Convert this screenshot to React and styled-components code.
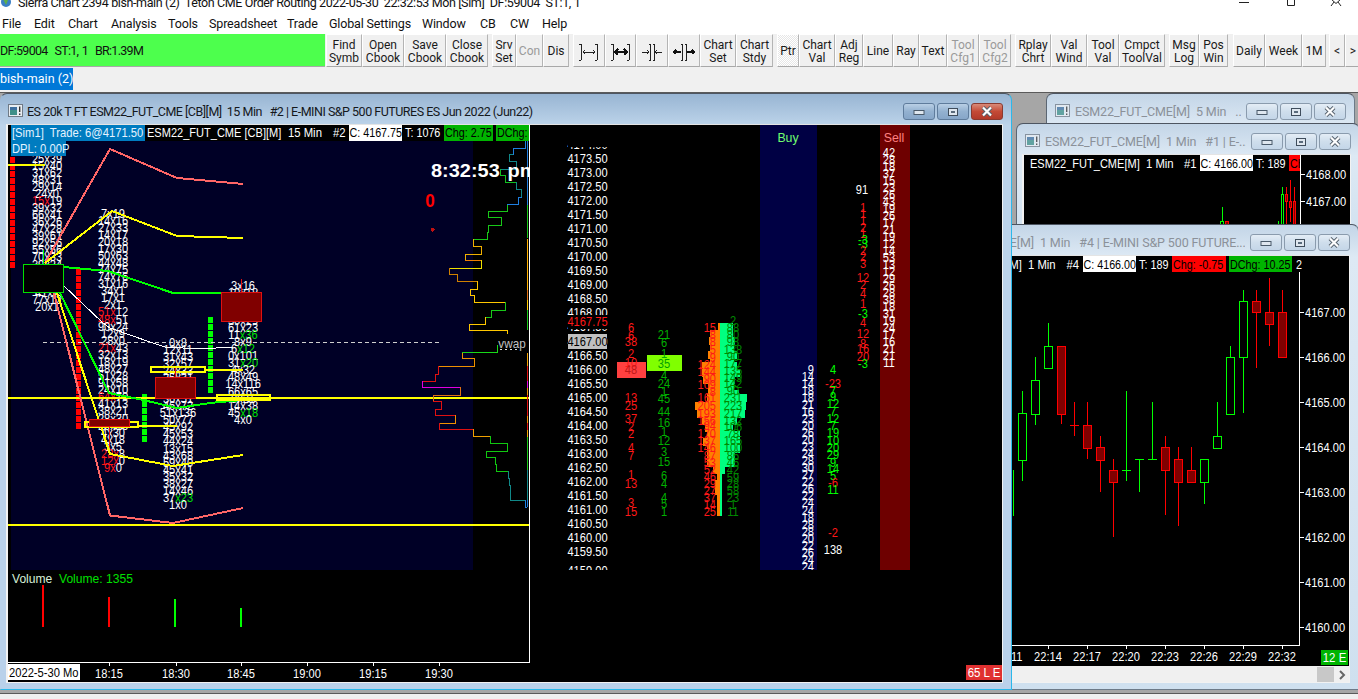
import React from 'react';
import styled, { createGlobalStyle } from 'styled-components';

const GlobalStyle = createGlobalStyle`
  html, body { margin: 0; padding: 0; background: #f0f0f0; overflow: hidden; }
`;

const Screen = styled.div`
  width: 1358px;
  height: 699px;
  overflow: hidden;
  display: flex;
  flex-direction: column;
  background: #f0f0f0;
  color: #111;
  font: 12px Roboto, "Liberation Sans", sans-serif;
`;

const TitleBar = styled.div`
  height: 12px;
  flex: none;
  background: #fff;
  display: flex;
  align-items: flex-start;
  justify-content: space-between;
  overflow: hidden;
  line-height: 6px;
  white-space: pre;
  padding-left: 1px;
`;

const TitleLeft = styled.div`
  display: flex;
  gap: 7px;
  font-size: 12.5px;
  letter-spacing: -0.38px;
`;

const SysButtons = styled.div`
  display: flex;
  width: 104px;
  justify-content: space-between;
  padding-right: 16px;
`;

const MenuBar = styled.div`
  height: 22px;
  flex: none;
  background: #fff;
  display: flex;
  align-items: center;
  padding: 0 0 0 2px;
  box-sizing: border-box;
`;

const MenuItem = styled.span`
  width: ${(p) => p.$w}px;
  font-size: 12.5px;
  letter-spacing: -0.15px;
`;

const Toolbar = styled.div`
  height: 34px;
  flex: none;
  display: flex;
  background: #f0f0f0;
`;

const StatusBox = styled.div`
  width: 325px;
  height: 33px;
  flex: none;
  margin-right: 1px;
  background: #4dff4d;
  border-bottom: 1px solid #a8a8a8;
  box-sizing: border-box;
  line-height: 33px;
  font-size: 12.5px;
  letter-spacing: -0.7px;
  word-spacing: 1px;
  white-space: pre;
`;

const ToolGroup = styled.div`
  display: flex;
  flex: none;
  margin-right: ${(p) => p.$gap ?? 4}px;
`;

const ToolButton = styled.div`
  width: ${(p) => p.$w}px;
  height: 33px;
  flex: none;
  box-sizing: border-box;
  padding-top: 2px;
  display: flex;
  align-items: center;
  justify-content: center;
  text-align: center;
  line-height: 13px;
  font-size: 12px;
  white-space: pre;
  color: ${(p) => (p.$off ? '#9a9a9a' : '#1a1a1a')};
  border-top: 1px solid #fff;
  border-left: 1px solid #fff;
  border-right: 1px solid #b4b4b4;
  border-bottom: 1px solid #a8a8a8;
  background: ${(p) =>
    p.$on ? 'repeating-conic-gradient(#fff 0 25%, #e6e6e6 0 50%) 0 0/2px 2px' : '#f0f0f0'};
`;

const TabRow = styled.div`
  height: 24px;
  flex: none;
  background: #f0f0f0;
`;

const Tab = styled.div`
  width: 73px;
  height: 22px;
  background: #0078d7;
  color: #fff;
  line-height: 22px;
  font-size: 12.5px;
  white-space: nowrap;
`;

const Desktop = styled.div`
  position: relative;
  flex: 1;
  background: #a6a6a6;
  border-top: 1px solid #5a5a5a;
  overflow: hidden;
`;

const BottomStrip = styled.div`
  height: 5px;
  flex: none;
  background: #f0f0f0;
  border-top: 1px solid #5a5a5a;
`;

const Window = styled.div`
  position: absolute;
  left: ${(p) => p.$left}px;
  top: ${(p) => p.$top}px;
  width: ${(p) => p.$w}px;
  height: ${(p) => p.$h}px;
  z-index: ${(p) => p.$z};
  box-sizing: border-box;
  display: flex;
  flex-direction: column;
  padding: 0 8px 6px 5px;
  border-radius: 7px 7px 0 0;
  border-top: 1px solid #4d5561;
  border-left: 1px solid ${(p) => (p.$active ? 'transparent' : '#5b6673')};
  border-right: 1px solid ${(p) => (p.$active ? '#2bb8ea' : '#6d7a88')};
  border-bottom: 1px solid ${(p) => (p.$active ? '#2bb8ea' : '#6d7a88')};
  background: ${(p) =>
    p.$active
      ? 'linear-gradient(#98b5d3 0, #bdd4ea 32px, #b9d1ea 100%)'
      : 'linear-gradient(#c3d5e7 0, #dde9f4 32px, #cfe0ef 100%)'};
`;

const Caption = styled.div`
  height: 30px;
  flex: none;
  display: flex;
  align-items: center;
  gap: ${(p) => (p.$active ? 4 : 5)}px;
  padding-left: ${(p) => (p.$active ? 2 : 3)}px;
  white-space: pre;
  overflow: hidden;
  font-size: 12.5px;
  letter-spacing: ${(p) => (p.$active ? -0.5 : -0.12)}px;
  color: ${(p) => (p.$active ? '#15181c' : '#8b9199')};
`;

const CaptionText = styled.span`
  flex: 1;
  min-width: 0;
  overflow: hidden;
  margin-top: 4px;
`;

const WinButtons = styled.div`
  display: flex;
  gap: 2px;
  margin-top: 5px;
  flex: none;
`;

const WinButton = styled.div`
  width: 32px;
  height: 17px;
  box-sizing: border-box;
  display: flex;
  align-items: center;
  justify-content: center;
  border-radius: 3px;
  border: 1px solid ${(p) => (p.$close ? '#8a3a30' : p.$active ? '#5f7c9c' : '#8a9bad')};
  background: ${(p) =>
    p.$close
      ? 'linear-gradient(#d98a78, #c44a36 50%, #b23a2a)'
      : p.$active
        ? 'linear-gradient(#b9cfe5, #93b1d0 50%, #86a6c8)'
        : 'linear-gradient(#e4edf6, #cfdeec 50%, #c4d6e8)'};
`;

const Client = styled.div`
  flex: 1;
  min-height: 0;
  display: flex;
  flex-direction: column;
  background: #000;
  border-top: 1px solid #e4e4e4;
  border-left: 2px solid #f2f2f2;
  border-right: 1px solid #f2f2f2;
  border-bottom: 1px solid #f2f2f2;
  overflow: hidden;
`;

const ChartSvg = styled.svg`
  display: block;
  flex: none;
  background: #000;
  shape-rendering: crispEdges;
`;

const ChartText = styled.text`
  font: ${(p) => p.$size || 13}px "Liberation Sans", Arial, sans-serif;
  font-weight: ${(p) => (p.$bold ? 700 : 400)};
  fill: ${(p) => p.$c};
  white-space: pre;
  text-rendering: optimizeSpeed;
`;

const Scrollbar = styled.div`
  height: 17px;
  flex: none;
  background: #f0f0f0;
  display: flex;
  justify-content: flex-end;
  align-items: center;
  padding-right: 2px;
  gap: 3px;
  color: #666;
`;

const ScrollThumb = styled.div`
  width: 17px;
  height: 15px;
  background: #c8c8c8;
`;

/* one chart label, x is squeezed because the chart font is narrower than Arial */
const T = ({ x, y, c = '#fff', a = 'middle', sx = 0.855, size, bold, children }) => (
  <ChartText
    transform={`translate(${x} ${y + 4.5}) scale(${sx} 1)`}
    textAnchor={a}
    $c={c}
    $size={size}
    $bold={bold}
  >
    {children}
  </ChartText>
);

const Box = ({ x, y, w, h, c, s }) => (
  <rect x={x} y={y} width={w} height={h} fill={c} stroke={s || 'none'} />
);

const Line = ({ pts, c, w = 2, dash }) => (
  <polyline points={pts} fill="none" stroke={c} strokeWidth={w} strokeDasharray={dash} />
);

/* symbol, period and chart number of a chart header row */
const ChartName = ({ y, name, xName, period, xPeriod, num, xNum }) => (
  <g>
    <T x={xName} y={y} a="start" sx={0.85}>{name}</T>
    <T x={xPeriod} y={y} a="start" sx={0.87}>{period}</T>
    <T x={xNum} y={y} a="start" sx={0.87}>{num}</T>
  </g>
);

const RED = '#ff1818';
const GREEN = '#00e000';

/* footprint cell: r marks a red left side, g a green right side */
const Cell = ({ x, y, v }) => {
  const [l, r] = v.split('x');
  const red = l[0] === 'r';
  const green = r[0] === 'g';
  return (
    <T x={x} y={y}>
      <tspan fill={red ? RED : '#fff'}>{(red ? l.slice(1) : l) + (red ? 'x' : '')}</tspan>
      <tspan fill={green ? GREEN : '#fff'}>{(red ? '' : 'x') + (green ? r.slice(1) : r)}</tspan>
    </T>
  );
};

const Col = ({ x, y, rows }) =>
  rows.map((v, i) => <Cell key={i} x={x} y={y + i * 7.07} v={v} />);

const colA = ['25x39', '15x40', '31x62', '48x31', '29x14', '24x0', 'r15x19', '39x32', '66x41', '36x26', '47x28', '39x61', '92x56', '55x56', '70x33', '39x24', '28x19', '33x12', '20x9', '41x7', '77x12', '20x1'];
const colB = ['7x19', '14x16', '27x33', '14x17', '20x18', '17x30', '50x63', '44x48', '74x75', '74x76', '31x16', '34x1', '17x1', '2x1', 'r51x12', 'r48x51', '90x24', '12x9', '28x0', 'r21x43', '32x13', '18x19', '48x27', '51x28', '91x58', '24x10', 'r64x70', '41x13', '38x21', '28x30', '26x16', '4x30', '4x18', '3x5', 'r28x8', 'r12x0', 'r9x0'];
const colC = ['0x8', '12x11', '31x43', '32x57', '24x33', '25x31', '18x12', '20x40', '36x51', '46x72', '51x136', '50x77', '45x92', '45x53', '44x24', '13x15', '43x68', '59x40', '45x41', '35x32', '38x27', '14x46', '37xg23', '1x0'];
const colD = ['3x16', '10x18', '22x31', '18x40', '41x12', '30x29', '61x23', '11xg36', '8x9', '6xg12', '0x101', '31xg20', '4x32', '48x49', '14x116', '66x65', '8x21', '14x38', '45xg18', '4x0'];

const squares = (x, from, to, c) => {
  const out = [];
  for (let y = from; y < to; y += 7) out.push(<rect key={y} x={x} y={y} width={5} height={6} fill={c} />);
  return out;
};

/* volume profile, points as measured in the 3x crops */
const profile = [
  ['#1f7fe0', 120, '765,62 765,85 730,85 730,104'],
  ['#108888', 120, '730,104 718,104 718,124 738,124 738,148 692,148'],
  ['#10c020', 120, '692,148 692,165 707,165 707,187 738,187'],
  ['#108888', 120, '738,187 738,208 755,208 755,232'],
  ['#1f7fe0', 120, '755,232 745,232 745,254 712,254'],
  ['#18c818', 120, '712,254 712,274 655,274 655,292 694,292 694,316 655,316 655,337 652,337 652,358 610,358'],
  ['#f0b000', 120, '610,358 610,380 635,380 635,403 586,403 586,421'],
  ['#f08000', 120, '586,421 635,421'],
  ['#f0e000', 120, '635,421 635,445 538,445'],
  ['#d08000', 120, '538,445 538,463 562,463 562,484 622,484'],
  ['#ffc800', 120, '622,484 622,508 601,508 601,526 612,526 612,547 707,547'],
  ['#18c818', 120, '707,547 707,571 664,571 664,592 647,592'],
  ['#ffc800', 120, '647,592 647,613 598,613 598,631 712,631 712,641'],
  ['#18d818', 340, '682,15 682,38 577,38'],
  ['#f09000', 340, '577,38 577,55 613,55 613,78 505,78'],
  ['#e01010', 340, '505,78 505,103 496,103 496,124 458,124'],
  ['#e000e0', 340, '458,124 458,142 571,142'],
  ['#e07010', 340, '571,142 571,166 490,166 490,184'],
  ['#e01010', 340, '490,184 514,184 514,208 496,208 496,226 556,226'],
  ['#f09000', 340, '556,226 556,250 508,250'],
  ['#e01010', 340, '508,250 508,268 610,268'],
  ['#f0a000', 340, '610,268 610,289 661,289'],
  ['#10c810', 340, '661,289 661,310 712,310 712,334 649,334 649,352 676,352 676,373 679,373 679,394 715,394'],
  ['#108888', 340, '715,394 715,415 718,415 718,436 721,436 721,481 766,481'],
  ['#1f7fe0', 340, '766,481 766,502 772,502'],
].map(([c, off, pts]) => [
  c,
  pts
    .split(' ')
    .map((p) => {
      const [x, y] = p.split(',');
      return `${(270 + x / 3).toFixed(1)},${(off + y / 3).toFixed(1)}`;
    })
    .join(' '),
]);

const strip = [
  ['#1f7fe0', 141, 205], ['#18c818', 205, 238], ['#ffb000', 239, 290], ['#e07010', 290, 300], ['#ffc800', 300, 310],
  ['#18c818', 310, 330], ['#f0a000', 353, 366], ['#e01010', 366, 381], ['#e000e0', 381, 388], ['#f09000', 388, 395],
  ['#e01010', 395, 416], ['#f09000', 416, 423], ['#e01010', 423, 430], ['#f0a000', 430, 437], ['#18c818', 437, 470],
  ['#108888', 470, 500], ['#1f7fe0', 500, 507],
];

const priceY = (p) => 341 + (4167 - p) * 28.06;
const priceList = [];
for (let i = 0; i < 30; i++) priceList.push(4174 - i * 0.5);

const redA = [[327, '6'], [335, '6'], [341, '38'], [353, '2'], [362, '10'], [397, '13'], [405, '25'], [418, '37'], [426, '2'], [433, '2'], [447, '4'], [455, '7'], [474, '1'], [483, '13'], [502, '3'], [511, '15']];
const greenA = [[334, '21'], [342, '6'], [353, '1'], [375, '4'], [383, '24'], [391, '1'], [398, '45'], [411, '44'], [422, '16'], [431, '1'], [440, '12'], [451, '3'], [461, '15'], [475, '6'], [483, '4'], [497, '4'], [503, '5'], [511, '1']];

/* y, left end of the orange bar, right end of the green bar */
const flow = [[323, 718, 733], [330, 710, 733], [337, 709, 735], [344, 710, 734], [351, 708, 737], [358, 710, 734], [362, 702, 737], [369, 702, 740], [376, 703, 735], [383, 708, 734], [390, 708, 739], [394, 707, 747], [402, 695, 746], [410, 697, 745], [417, 702, 737], [424, 705, 733], [431, 707, 740], [438, 703, 740], [445, 707, 740], [452, 707, 735], [459, 707, 735], [466, 713, 725], [473, 717, 722], [480, 715, 722], [487, 715, 722], [494, 717, 722], [501, 717, 722], [508, 717, 722]];
const flowRed = [[327, '15'], [334, '8'], [341, '8'], [349, '5'], [357, '9'], [364, '124'], [371, '144'], [378, '90'], [384, '109'], [391, '8'], [397, '161'], [405, '205'], [413, '193'], [420, '156'], [425, '94'], [433, '170'], [440, '137'], [447, '146'], [455, '87'], [462, '53'], [469, '52'], [476, '46'], [483, '29'], [490, '27'], [497, '37'], [504, '14'], [511, '25']];
const flowGreen = [[320, '2'], [327, '88'], [334, '80'], [341, '98'], [349, '138'], [356, '90'], [363, '177'], [370, '135'], [377, '149'], [383, '142'], [390, '90'], [397, '231'], [405, '223'], [413, '217'], [420, '132'], [426, '106'], [433, '78'], [440, '165'], [447, '100'], [455, '86'], [462, '46'], [469, '42'], [477, '59'], [483, '28'], [490, '58'], [497, '23'], [504, '1'], [511, '11']];

const buy = [9, 14, 14, 18, 18, 21, 16, 23, 20, 26, 20, 23, 24, 28, 30, 27, 22, 26, 22, 24, 24, 18, 28, 28, 20, 22, 26, 24, 24];
const sell = [42, 28, 18, 37, 15, 23, 26, 43, 19, 26, 17, 21, 19, 12, 14, 53, 13, 12, 29, 26, 28, 38, 18, 31, 19, 24, 17, 16, 21, 21, 11];
const deltaR = [[207, '1'], [213, '1'], [220, '1'], [227, '2'], [233, '1'], [239, '-3', 1], [243, '-3', 1], [250, '2'], [256, '2'], [263, '3'], [277, '12'], [284, '2'], [293, '4'], [303, '1'], [313, '-3', 1], [322, '4'], [333, '12'], [343, '8'], [348, '16'], [356, '20'], [363, '-3', 1]];
const deltaL = [[369, '4', 1], [383, '-23'], [390, '7', 1], [396, '9', 1], [403, '12', 1], [411, '7', 1], [418, '12', 1], [425, '7', 1], [432, '19', 1], [440, '10', 1], [447, '20', 1], [454, '29', 1], [462, '9', 1], [468, '14', 1], [475, '5', 1], [482, '-6'], [489, '11', 1], [532, '-2']];

const GlyphMin = ({ c = '#dfe7ef' }) => (
  <svg width="12" height="8" viewBox="0 0 12 8"><rect x="1" y="2.5" width="10" height="4" fill={c} stroke="#4a5a6a" /></svg>
);
const GlyphMax = () => (
  <svg width="12" height="10" viewBox="0 0 12 10"><rect x="1.5" y="1.5" width="9" height="7" fill="#dfe7ef" stroke="#3f4d5c" /><rect x="4" y="4" width="4" height="2" fill="#5a6b7c" /></svg>
);
const GlyphX = () => (
  <svg width="14" height="11" viewBox="0 0 14 11">
    <path d="M3 1.5 L11 9.5 M11 1.5 L3 9.5" stroke="#55606c" strokeWidth="4" />
    <path d="M3 1.5 L11 9.5 M11 1.5 L3 9.5" stroke="#fff" strokeWidth="2.2" />
  </svg>
);
const WinIcon = ({ dim }) => (
  <svg width="15" height="14" viewBox="0 0 15 14" style={{ flex: 'none', marginTop: 4, opacity: dim ? 0.75 : 1 }}>
    <rect x=".5" y=".5" width="14" height="12" fill="#e8edf2" stroke="#6f7a86" />
    <rect x="2" y="3" width="7" height="8" fill="#3d8f88" />
    <rect x="2" y="3" width="7" height="3" fill="#3d6f9f" />
    <rect x="11" y="2.5" width="1.4" height="5.5" fill="#333" />
    <rect x="11" y="9.5" width="1.4" height="1.5" fill="#333" />
  </svg>
);

const Controls = ({ active }) => (
  <WinButtons>
    <WinButton $active={active}><GlyphMin /></WinButton>
    <WinButton $active={active}><GlyphMax /></WinButton>
    <WinButton $active={active} $close={active}><GlyphX /></WinButton>
  </WinButtons>
);

const CaptionRow = ({ active, children }) => (
  <Caption $active={active}>
    <WinIcon dim={!active} />
    <CaptionText>{children}</CaptionText>
    <Controls active={active} />
  </Caption>
);

/* bracket glyphs of the toolbar, kind picks the arrows between the bars */
const BarIcon = ({ kind }) => (
  <svg width="22" height="18" viewBox="0 0 22 18" shapeRendering="crispEdges">
    {(kind < 2 ? [3, 19] : [9, 13]).map((x) => (
      <g key={x} stroke="#222">
        <path d={`M${x} 1V17`} />
        <path d={kind < 2 ? `M${x - 2} 1H${x} M${x - 2} 17H${x}` : `M${x - 1} 1H${x + 1} M${x - 1} 17H${x + 1}`} />
      </g>
    ))}
    {kind === 0 && <path d="M5 9H17 M7 7L5 9L7 11 M15 7L17 9L15 11" stroke="#222" fill="none" />}
    {kind === 1 && <path d="M5 9H17 M8 6L5 9L8 12 M14 6L17 9L14 12" stroke="#111" strokeWidth="2" fill="none" />}
    {kind === 2 && <path d="M1 9H8 M6 7L8 9L6 11 M21 9H14 M16 7L14 9L16 11" stroke="#222" fill="none" />}
    {kind === 3 && <path d="M1 9H8 M3 7L1 9L3 11 M21 9H14 M19 7L21 9L19 11" stroke="#111" strokeWidth="1.6" fill="none" />}
  </svg>
);

const menu = [['File', 32], ['Edit', 34], ['Chart', 43], ['Analysis', 57], ['Tools', 41], ['Spreadsheet', 78], ['Trade', 42], ['Global Settings', 93], ['Window', 58], ['CB', 30], ['CW', 32], ['Help', 30]];

const toolGroups = [
  { items: [['Find\nSymb', 36], ['Open\nCbook', 42], ['Save\nCbook', 42], ['Close\nCbook', 42]] },
  { items: [['Srv\nSet', 24], ['Con', 27, 'off'], ['Dis', 26]] },
  { items: [[0, 32], [1, 31], [2, 32], [3, 32], ['Chart\nSet', 36], ['Chart\nStdy', 37]] },
  { items: [['Ptr', 22, 'on'], ['Chart\nVal', 36], ['Adj\nReg', 28], ['Line', 30], ['Ray', 26], ['Text', 28], ['Tool\nCfg1', 32, 'off'], ['Tool\nCfg2', 32, 'off']] },
  { items: [['Rplay\nChrt', 36], ['Val\nWind', 36], ['Tool\nVal', 32], ['Cmpct\nToolVal', 46]] },
  { items: [['Msg\nLog', 30], ['Pos\nWin', 29]], gap: 5 },
  { items: [['Daily', 32], ['Week', 37], ['1M', 24]], gap: 3 },
  { items: [['<', 16], ['>', 16]], gap: 0 },
];

const MainChart = () => (
  <ChartSvg width="994" height="557" viewBox="8 125 994 557">
    {/* backgrounds */}
    <Box x={11} y={141} w={462} h={429} c="#000026" />
    <Box x={760} y={125} w={57} h={445} c="#000044" />
    <Box x={880} y={125} w={30} h={445} c="#6e0000" />

    {/* order flow ladder */}
    {priceList.map((p) => (
      <T key={p} x={587.5} y={priceY(p)}>{p.toFixed(2)}</T>
    ))}
    <T x={587.5} y={570}>4159.00</T>
    <Box x={568} y={140} w={40} h={7} c="#000" />
    <Box x={568} y={315} w={40} h={14} c="#000" />
    <T x={587.5} y={321} c="#ff1818">4167.75</T>
    <Box x={568} y={334} w={39} h={15} c="#c0c0c0" />
    <T x={587.5} y={341} c="#000">4167.00</T>

    <Box x={617} y={362} w={29} h={16} c="#ff4040" />
    <Box x={647} y={355} w={35} h={16} c="#80ff00" />
    {redA.map(([y, v], i) => <T key={i} x={631} y={y} c={RED}>{v}</T>)}
    <T x={631} y={369} c="#c01818">48</T>
    {greenA.map(([y, v], i) => <T key={i} x={664} y={y} c="#00b000">{v}</T>)}
    <T x={664} y={363} c="#00a000">35</T>

    {flow.map(([y, l, r]) => (
      <g key={y}>
        <rect x={l} y={y} width={720 - l} height={8} fill="#ff8000" />
        <rect x={720} y={y} width={r - 720} height={8} fill="#00ff80" />
      </g>
    ))}
    {flowRed.map(([y, v], i) => <T key={i} x={716} y={y} a="end" c={RED}>{v}</T>)}
    {flowGreen.map(([y, v], i) => <T key={i} x={733} y={y} c="#008a00">{v}</T>)}

    <T x={788} y={137} c="#70ff70" sx={0.95}>Buy</T>
    {buy.map((v, i) => <T key={i} x={814} y={369 + i * 7.05} a="end">{v}</T>)}
    <T x={894} y={137} c="#ff8080" sx={0.95}>Sell</T>
    {sell.map((v, i) => <T key={i} x={889} y={152 + i * 7.03}>{v}</T>)}

    <T x={862} y={189}>91</T>
    {deltaR.map(([y, v, g], i) => <T key={i} x={863} y={y} c={g ? '#00ff00' : RED}>{v}</T>)}
    {deltaL.map(([y, v, g], i) => <T key={i} x={833} y={y} c={g ? '#00ff00' : RED}>{v}</T>)}
    <T x={833} y={549}>138</T>

    <Box x={530} y={570} w={472} h={112} c="#000" />

    {/* left chart */}
    {squares(10, 157, 266, '#ff0000')}
    {squares(76, 269, 428, '#ff0000')}
    {squares(141.5, 394, 443, '#00ff00')}
    {squares(208, 317, 393, '#00ff00')}

    <Col x={47} y={158} rows={colA} />
    <Col x={113} y={213} rows={colB} />
    <Col x={178} y={342} rows={colC} />
    <Col x={243} y={285} rows={colD} />

    <Line pts="8,165 45,165" c="#ffff00" />
    <Line pts="8,397.5 529,397.5" c="#ffff00" />
    <Line pts="8,525 529,525" c="#ffff00" />
    <Line pts="43,342.5 440,342.5" c="#cfcfcf" w={1} dash="4 3" />

    <Line pts="63,285 103,323 110,328 150,342 165,347 200,349 233,347" c="#fff" w={1} />
    <Line pts="45,263 110,149 177,178 243,184" c="#ff6666" />
    <Line pts="54,293 110,515.5 173,523 243,508" c="#ff6666" />
    <Line pts="45,263 112,211 177,236 243,238" c="#ffff00" />
    <Line pts="57,293 110,454 173,466 243,455" c="#ffff00" />
    <Line pts="63,267 108,271 173,293 222,293" c="#00ff00" />
    <Line pts="60,293 109,393 143,400 177,408 210,403 243,400" c="#00ff00" />

    <rect x={85} y={422} width={53} height={5} fill="none" stroke="#ffff00" strokeWidth="2" />
    <Line pts="138,426 177,426" c="#ffff00" />
    <rect x={151} y={367} width={54} height={4.5} fill="none" stroke="#ffff00" strokeWidth="2" />
    <Line pts="205,370 243,370" c="#ffff00" />
    <rect x={217} y={395} width={53} height={4.5} fill="none" stroke="#ffff00" strokeWidth="2" />

    <Line pts="43.5,250 43.5,264" c="#00ff00" w={1} />
    <Box x={23.5} y={264.5} w={40} h={28} c="#000" s="#00e000" />
    <Line pts="241.5,279 241.5,292" c="#e01010" w={1} />
    <Box x={221.5} y={292.5} w={40} h={29} c="#800000" s="#e01010" />
    <Line pts="175.5,368 175.5,377" c="#e01010" w={1} />
    <Box x={155.5} y={377.5} w={40} h={21} c="#800000" s="#e01010" />
    <Line pts="109.5,427 109.5,447" c="#e01010" w={1} />
    <Box x={89.5} y={419.5} w={40} h={7} c="#800000" s="#e01010" />

    {profile.map(([c, pts], i) => <Line key={i} pts={pts} c={c} w={1} />)}
    {strip.map(([c, a, b]) => <rect key={a} x={527} y={a} width={1} height={b - a} fill={c} />)}
    <T x={512} y={343} c="#c0c0c0" sx={0.9}>vwap</T>
    <Line pts="500,349.5 503,349.5 507,349.5 510,349.5 515,349.5 520,349.5" c="#ddd" w={1} dash="2 3" />

    <T x={431} y={172.5} a="start" bold size={19} sx={1.05}>8:32:53</T>
    <T x={507.5} y={172.5} a="start" bold size={19} sx={1.05}>pm</T>
    <T x={430} y={202} bold size={19} c="#ff0000" sx={0.9}>0</T>
    <circle cx={432.7} cy={229.7} r={2} fill="#c01010" />
    <Box x={530} y={141} w={14} h={44} c="#000" />

    {/* header row */}
    <Box x={8} y={125} w={522} h={16} c="#000" />
    <Box x={11} y={125} w={134} h={16} c="#007cc0" />
    <Box x={11} y={141} w={55} h={15} c="#007cc0" />
    <T x={12} y={132} a="start" c="#e4f3ff" sx={0.865}>[Sim1]  Trade: 6@4171.50</T>
    <T x={12} y={148} a="start" c="#e4f3ff" sx={0.865}>DPL: 0.00P</T>
    <ChartName y={132} name="ESM22_FUT_CME [CB][M]" xName={147} period="15 Min" xPeriod={288} num="#2" xNum={333} />
    <Box x={349} y={125} w={53} h={16} c="#fff" />
    <T x={349.5} y={132} a="start" c="#000" sx={0.827}>C: 4167.75</T>
    <T x={405} y={132} a="start" sx={0.83}>T: 1076</T>
    <Box x={444} y={125} w={49} h={16} c="#00b400" />
    <T x={445} y={132} a="start" c="#000" sx={0.83}>Chg: 2.75</T>
    <Box x={496} y={125} w={33} h={16} c="#00b400" />
    <T x={497} y={132} a="start" c="#000" sx={0.83}>DChg:</T>

    {/* volume pane */}
    <Box x={8} y={570} w={521} h={92} c="#000" />
    <T x={12} y={578} a="start" c="#d8f0d8" sx={0.93}>Volume</T>
    <T x={59} y={578} a="start" c="#00e000" sx={0.93}>Volume: 1355</T>
    <Line pts="43,585 43,627" c="#ff0000" />
    <Line pts="108.5,597 108.5,627" c="#ff0000" />
    <Line pts="175,599 175,627" c="#00ff00" />
    <Line pts="240.5,608 240.5,627" c="#00ff00" />

    <Line pts="8,662.5 530,662.5" c="#fff" w={1} />
    <Line pts="529.5,125 529.5,663" c="#fff" w={1} />
    <Box x={8} y={664} w={72} h={16} c="#fff" />
    <T x={9} y={672} a="start" c="#000" sx={0.86}>2022-5-30 Mo</T>
    {[['18:15', 109], ['18:30', 176], ['18:45', 241], ['19:00', 307], ['19:15', 373], ['19:30', 439]].map(([t, x]) => (
      <g key={t}>
        <rect x={x} y={663} width={1} height={3} fill="#fff" />
        <T x={x} y={673}>{t}</T>
      </g>
    ))}
    <Box x={966} y={665} w={36} h={15} c="#e03030" />
    <T x={984} y={672} sx={0.88}>65 L E</T>
  </ChartSvg>
);

const Tick = ({ x, y, label }) => (
  <g>
    <rect x={x} y={y} width={4} height={1} fill="#fff" />
    <T x={x + 5} y={y} a="start">{label}</T>
  </g>
);

const Candle = ({ x, hi, lo, top, bot, red }) => {
  const c = red ? '#ff0000' : '#00ff00';
  const wick = <Line pts={`${x + 0.5},${hi} ${x + 0.5},${lo}`} c={c} w={1} />;
  if (top === bot) {
    return (
      <g>
        {wick}
        <Line pts={`${x - 4},${top + 0.5} ${x + 5},${top + 0.5}`} c={c} w={1} />
      </g>
    );
  }
  return (
    <g>
      {wick}
      <rect x={x - 3.5} y={top + 0.5} width={8} height={bot - top} fill={red ? '#800000' : '#000'} stroke={c} />
    </g>
  );
};

const z = (v) => Math.round(340 + v / 3);
const barsFour = [
  [1022, z(155), z(425), z(222), z(362)],
  [1035, z(53), z(258), z(124), z(224)],
  [1048, 324, 347, 347, z(88)],
  [1061, 347, 425, 347, z(224), 1],
  [1074, z(188), z(291), z(258), z(258), 1],
  [1087, z(188), z(360), z(258), z(326), 1],
  [1100, z(291), z(458), z(325), z(362), 1],
  [1113, z(360), z(594), z(394), z(428), 1],
  [1126, z(155), z(425), z(394), z(394)],
  [1139, z(360), z(458), z(360), z(360)],
  [1152, z(188), z(360), z(360), z(360)],
  [1165, z(291), z(527), z(325), z(394), 1],
  [1178, z(325), z(560), z(360), z(428), 1],
  [1191, z(325), z(428), z(394), z(428), 1],
  [1204, z(360), z(495), z(360), z(428)],
  [1217, z(188), z(326), z(291), z(326)],
  [1230, z(20), z(224), z(55), z(224)],
  [1243, 291, z(222), 302, z(55)],
  [1256, 291, z(88), 302, 313, 1],
  [1269, 279, z(20), 313, 325, 1],
  [1282, 291, z(55), 313, 358, 1],
];

const ChartOne = () => (
  <ChartSvg width="326" height="100" viewBox="1024 155 326 100">
    <Line pts="1222.5,207 1222.5,225" c="#00ff00" w={1} />
    <rect x={1220.5} y={221.5} width={3} height={4} fill="#000" stroke="#00ff00" />
    <rect x={1225.5} y={221.5} width={3} height={4} fill="#800000" stroke="#ff0000" />
    <Line pts="1278.5,221 1278.5,225" c="#00ff00" w={1} />
    <Line pts="1282.5,187 1282.5,225" c="#00ff00" w={1} />
    <rect x={1281.5} y={194.5} width={2} height={30} fill="#000" stroke="#00ff00" />
    <Line pts="1286.5,187 1286.5,225" c="#ff0000" w={1} />
    <rect x={1285.5} y={194.5} width={2} height={7} fill="#800000" stroke="#ff0000" />
    <Line pts="1290.5,180 1290.5,222" c="#ff0000" w={1} />
    <rect x={1289.5} y={201.5} width={2} height={6} fill="#800000" stroke="#ff0000" />
    <Line pts="1294.5,187 1294.5,225" c="#ff0000" w={1} />
    <rect x={1293.5} y={201.5} width={2} height={24} fill="#800000" stroke="#ff0000" />
    <ChartName y={163} name="ESM22_FUT_CME[M]" xName={1030} period="1 Min" xPeriod={1146} num="#1" xNum={1184} />
    <Box x={1200} y={155} w={53} h={16} c="#fff" />
    <T x={1200.5} y={163} a="start" c="#000" sx={0.827}>C: 4166.00</T>
    <T x={1256} y={163} a="start" sx={0.83}>T: 189</T>
    <Box x={1289} y={155} w={11} h={16} c="#ff0000" />
    <T x={1290} y={163} a="start" c="#000" sx={0.83}>Ch</T>
    <Line pts="1300.5,155 1300.5,255" c="#fff" w={1} />
    <Tick x={1301} y={174} label="4168.00" />
    <Tick x={1301} y={201} label="4167.00" />
    <Tick x={1301} y={228} label="4166.00" />
  </ChartSvg>
);

const ChartFour = () => (
  <ChartSvg width="451" height="393" viewBox="898 257 451 393">
    <Line pts="1012.5,471 1013.5,471 1013.5,516 1012.5,516" c="#00ff00" w={1} />
    {barsFour.map(([x, hi, lo, top, bot, red]) => (
      <Candle key={x} x={x} hi={hi} lo={lo} top={top} bot={bot} red={red} />
    ))}
    <ChartName y={265} name="ESM22_FUT_CME[M]" xName={912} period="1 Min" xPeriod={1028} num="#4" xNum={1066.5} />
    <Box x={1083} y={257} w={53} h={16} c="#fff" />
    <T x={1083.5} y={265} a="start" c="#000" sx={0.827}>C: 4166.00</T>
    <T x={1139} y={265} a="start" sx={0.83}>T: 189</T>
    <Box x={1172} y={257} w={54} h={16} c="#ff0000" />
    <T x={1173} y={265} a="start" c="#000" sx={0.83}>Chg: -0.75</T>
    <Box x={1229} y={257} w={63} h={16} c="#00b400" />
    <T x={1230} y={265} a="start" c="#000" sx={0.83}>DChg: 10.25</T>
    <T x={1296} y={265} a="start" sx={0.83}>2</T>
    <Line pts="1299.5,273 1299.5,647" c="#fff" w={1} />
    <Line pts="898,646.5 1300,646.5" c="#fff" w={1} />
    {[4167, 4166, 4165, 4164, 4163, 4162, 4161, 4160].map((p) => (
      <Tick key={p} x={1300} y={358 + (4166 - p) * 45} label={`${p}.00`} />
    ))}
    {[1009, 1048, 1087, 1126, 1165, 1204, 1243, 1282].map((x) => (
      <rect key={x} x={x} y={647} width={1} height={3} fill="#fff" />
    ))}
  </ChartSvg>
);

const AxisFour = () => (
  <ChartSvg width="451" height="17" viewBox="898 650 451 17">
    {[['22:11', 1009], ['22:14', 1048], ['22:17', 1087], ['22:20', 1126], ['22:23', 1165], ['22:26', 1204], ['22:29', 1243], ['22:32', 1282]].map(([t, x]) => (
      <T key={t} x={x} y={657.5}>{t}</T>
    ))}
    <Box x={1321} y={651} w={27} h={15} c="#00b400" />
    <T x={1334.5} y={658} sx={0.88}>12 E</T>
  </ChartSvg>
);

export default function App() {
  return (
    <Screen>
      <GlobalStyle />
      <TitleBar>
        <TitleLeft>
          <svg width="10" height="10" viewBox="0 0 10 10" style={{ marginTop: -3 }}>
            <circle cx="5" cy="5" r="5" fill="#3a7fc4" />
            <path d="M2 2 L7 3 L5 8 Z" fill="#5db04a" />
          </svg>
          <span>Sierra Chart 2394 bish-main (2)  Teton CME Order Routing 2022-05-30  22:32:53 Mon [Sim]  DF:59004  ST:1, 1</span>
        </TitleLeft>
        <SysButtons>
          <svg width="12" height="6" viewBox="0 0 12 6"><path d="M1 2.5H11" stroke="#222" /></svg>
          <svg width="12" height="6" viewBox="0 0 12 6"><path d="M3.5 0V5.5H10.5V0 M5.5 -1V0" fill="none" stroke="#222" /></svg>
          <svg width="12" height="6" viewBox="0 0 12 6"><path d="M1 -1L6 3.5L11 -1 M4 2L1 6 M8 2L11 6" fill="none" stroke="#222" /></svg>
        </SysButtons>
      </TitleBar>
      <MenuBar>
        {menu.map(([m, w]) => <MenuItem key={m} $w={w}>{m}</MenuItem>)}
      </MenuBar>
      <Toolbar>
        <StatusBox>DF:59004  ST:1, 1  BR:1.39M</StatusBox>
        {toolGroups.map((g, i) => (
          <ToolGroup key={i} $gap={g.gap}>
            {g.items.map(([label, w, state]) => (
              <ToolButton key={label} $w={w} $off={state === 'off'} $on={state === 'on'}>
                {typeof label === 'number' ? <BarIcon kind={label} /> : label}
              </ToolButton>
            ))}
          </ToolGroup>
        ))}
      </Toolbar>
      <TabRow><Tab>bish-main (2)</Tab></TabRow>
      <Desktop>
        <Window $left={1046} $top={0} $w={309} $h={120} $z={1}>
          <CaptionRow>ESM22_FUT_CME[M]  5 Min   ...</CaptionRow>
        </Window>
        <Window $left={1016} $top={30} $w={344} $h={130} $z={2}>
          <CaptionRow>ESM22_FUT_CME[M]  1 Min   #1 | E-...</CaptionRow>
          <Client><ChartOne /></Client>
        </Window>
        <Window $left={890} $top={131} $w={469} $h={466} $z={3}>
          <CaptionRow>ESM22_FUT_CME[M]  1 Min   #4 | E-MINI S&amp;P 500 FUTURE...</CaptionRow>
          <Client>
            <ChartFour />
            <AxisFour />
            <Scrollbar>
              <ScrollThumb />
              <svg width="10" height="10" viewBox="0 0 10 10"><path d="M3 1L7 5L3 9" fill="none" stroke="#666" strokeWidth="2" /></svg>
            </Scrollbar>
          </Client>
        </Window>
        <Window $left={0} $top={0} $w={1012} $h={597} $z={4} $active>
          <CaptionRow active>ES 20k T FT ESM22_FUT_CME [CB][M]  15 Min   #2 | E-MINI S&amp;P 500 FUTURES ES Jun 2022 (Jun22)</CaptionRow>
          <Client><MainChart /></Client>
        </Window>
      </Desktop>
      <BottomStrip />
    </Screen>
  );
}
